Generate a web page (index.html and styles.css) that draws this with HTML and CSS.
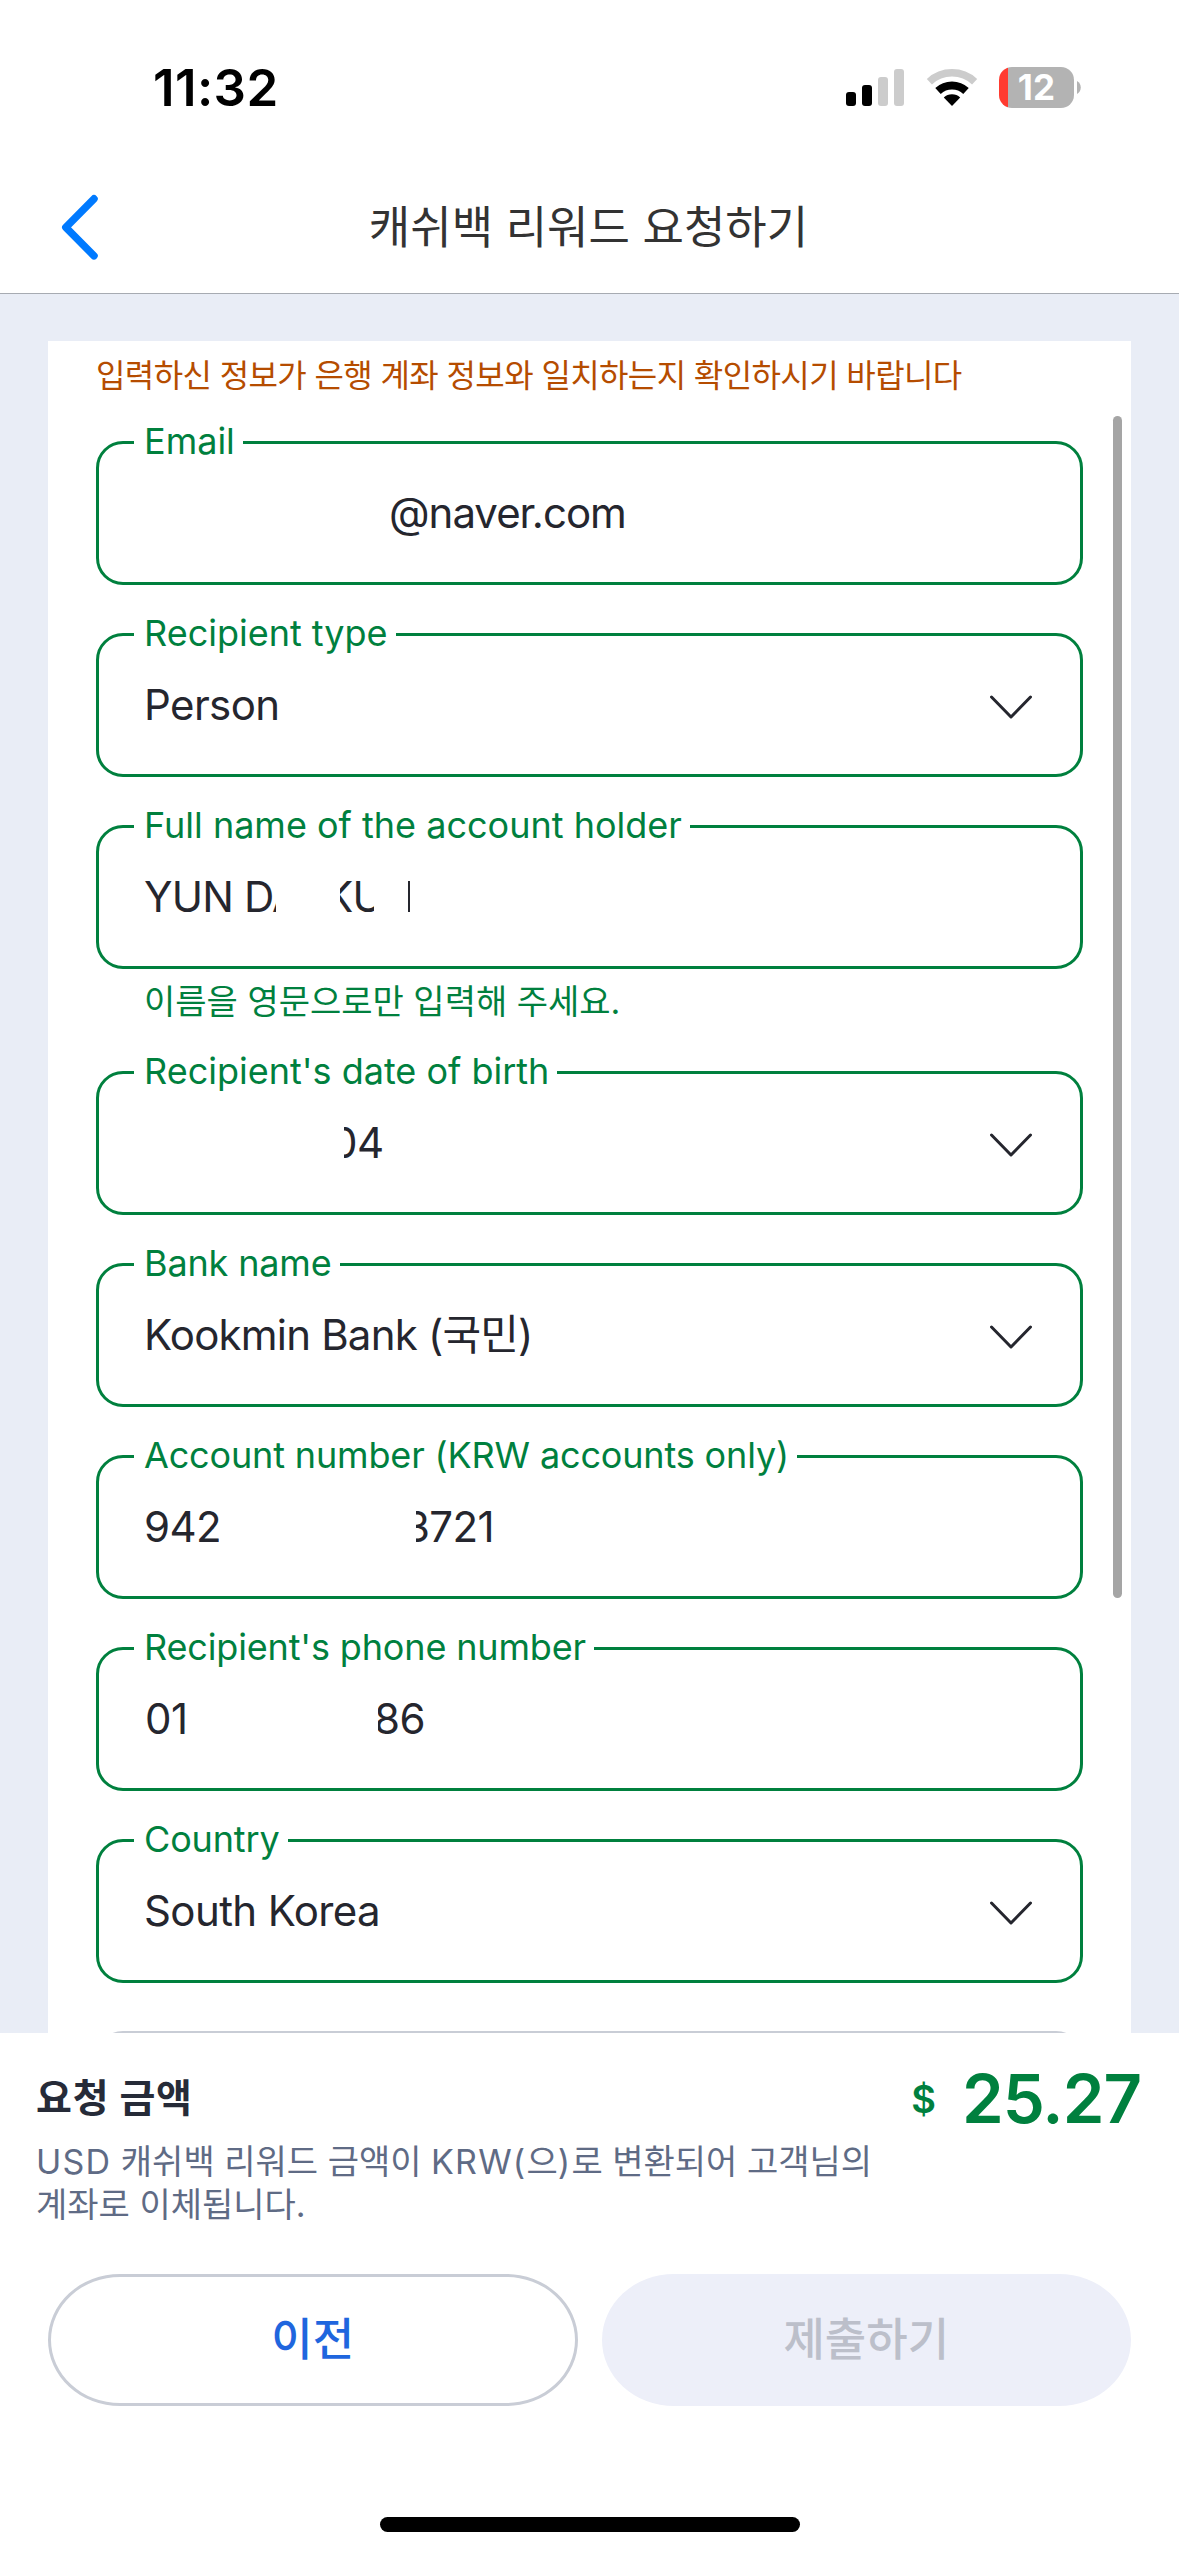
FILE: index.html
```
<!DOCTYPE html>
<html lang="ko">
<head>
<meta charset="utf-8">
<title>캐쉬백 리워드 요청하기</title>
<link rel="stylesheet" href="styles.css">
</head>
<body>
<div class="screen">
  <div class="status">
    <span class="time">11:32</span>
    <div class="indicators">
      <svg class="signal" width="58" height="38" viewBox="0 0 58 38">
        <rect x="0" y="23" width="10" height="14" rx="3"/>
        <rect x="16" y="16" width="10" height="21" rx="3"/>
        <rect class="dim" x="32" y="8" width="10" height="29" rx="3"/>
        <rect class="dim" x="48" y="0" width="10" height="37" rx="3"/>
      </svg>
      <svg class="wifi" width="52" height="38" viewBox="0 0 52 38">
        <path class="arc dim" d="M3.4 12.7A33.2 33.2 0 0 1 48.6 12.7"/>
        <path class="arc" d="M12 22A20.5 20.5 0 0 1 40 22"/>
        <path d="M26 37L17.8 28.4A12 12 0 0 1 34.2 28.4Z"/>
      </svg>
      <div class="battery">
        <div class="cell"><span>12</span></div>
        <svg width="4" height="14" viewBox="0 0 4 14"><path d="M0 0C5 2.5 5 10.500 0 13Z"/></svg>
      </div>
    </div>
  </div>

  <header class="nav">
    <svg class="back" width="40" height="68" viewBox="0 0 40 68"><path d="M34 4.800L5.800 33.300L34 61.800"/></svg>
    <h1>캐쉬백 리워드 요청하기</h1>
  </header>

  <main class="body">
    <section class="card">
      <p class="warning">입력하신 정보가 은행 계좌 정보와 일치하는지 확인하시기 바랍니다</p>

      <div class="field">
        <label>Email</label>
        <div class="value email">@naver.com</div>
      </div>
      <div class="field">
        <label>Recipient type</label>
        <div class="value person">Person</div>
        <svg class="chevron" width="48" height="48" viewBox="0 0 48 48"><path d="M4.500 16L24 36L43.500 16"/></svg>
      </div>
      <div class="field">
        <label>Full name of the account holder</label>
        <div class="value name"><span class="slice first">YUN DA</span><span class="slice mid">KU</span><span class="slice last">I</span></div>
      </div>
      <p class="hint">이름을 영문으로만 입력해 주세요.</p>
      <div class="field">
        <label>Recipient's date of birth</label>
        <div class="value birth"><span class="slice tail">04</span></div>
        <svg class="chevron" width="48" height="48" viewBox="0 0 48 48"><path d="M4.500 16L24 36L43.500 16"/></svg>
      </div>
      <div class="field">
        <label class="tight">Bank name</label>
        <div class="value bank">Kookmin Bank (국민)</div>
        <svg class="chevron" width="48" height="48" viewBox="0 0 48 48"><path d="M4.500 16L24 36L43.500 16"/></svg>
      </div>
      <div class="field">
        <label class="tight">Account number (KRW accounts only)</label>
        <div class="value account"><span class="slice head">942</span><span class="slice tail">3721</span></div>
      </div>
      <div class="field">
        <label class="tight">Recipient's phone number</label>
        <div class="value phone"><span class="slice head">01</span><span class="slice tail">86</span></div>
      </div>
      <div class="field">
        <label class="tight">Country</label>
        <div class="value country">South Korea</div>
        <svg class="chevron" width="48" height="48" viewBox="0 0 48 48"><path d="M4.500 16L24 36L43.500 16"/></svg>
      </div>
      <div class="field empty"></div>
    </section>
    <div class="scrollbar"></div>
  </main>

  <footer class="summary">
    <div class="total">
      <h2>요청 금액</h2>
      <div class="amount"><span class="currency">$</span><span class="number">25.27</span></div>
    </div>
    <p class="note"><span class="latin">USD</span> 캐쉬백 리워드 금액이 <span class="latin">KRW(</span>으<span class="latin">)</span>로 변환되어 고객님의<br>계좌로 이체됩니다.</p>
    <div class="actions">
      <button class="btn prev">이전</button>
      <button class="btn submit" disabled>제출하기</button>
    </div>
    <div class="home"></div>
  </footer>
</div>
</body>
</html>
```
FILE: styles.css
```
* { box-sizing: border-box; margin: 0; padding: 0; }

body {
  background: #fff;
  font-family: Inter, "Noto Sans CJK KR", sans-serif;
  color: #25262e;
}

.screen {
  width: 1179px;
  height: 2556px;
  display: flex;
  flex-direction: column;
  overflow: hidden;
}

/* status bar */
.status {
  flex: none;
  height: 162px;
  padding: 13px 98px 0 153px;
  display: flex;
  justify-content: space-between;
  align-items: center;
}
.time { font-size: 51px; line-height: 62px; font-weight: 600; letter-spacing: 0.4px; color: #000; }
.indicators { display: flex; align-items: center; }
.signal .dim { fill: #ccc; }
.wifi { margin: 0 21px 0 22px; }
.wifi .arc { fill: none; stroke: #000; stroke-width: 8; }
.wifi .arc.dim { stroke: #ccc; stroke-width: 7.5; }
.battery { display: flex; align-items: center; gap: 3px; }
.battery svg { fill: #b3b3b3; }
.cell {
  width: 75px;
  height: 41px;
  border-radius: 13px;
  background: linear-gradient(to right, #ff3b30 9px, #b3b3b3 9px);
  display: flex;
  align-items: center;
  justify-content: center;
}
.cell span { color: #fff; font-size: 35px; line-height: 41px; font-weight: 700; letter-spacing: 0.2px; }

/* navigation */
.nav {
  flex: none;
  height: 132px;
  border-bottom: 1px solid #a7abb2;
  display: grid;
  grid-template-columns: 120px 1fr 120px;
  align-items: center;
}
.back { margin-left: 60px; }
.back path { fill: none; stroke: #007aff; stroke-width: 7.500; stroke-linecap: round; stroke-linejoin: round; }
.nav h1 { padding-right: 2px; font-size: 45px; line-height: 54px; font-weight: 400; color: #333; text-align: center; }

/* form */
.body {
  flex: none;
  position: relative;
  height: 1739px;
  padding: 47px 48px 0;
  background: #e9edf6;
  overflow: hidden;
}
.card { background: #fff; height: 1800px; padding: 15px 48px 0; }
.warning { font-size: 32px; line-height: 40px; letter-spacing: -0.62px; color: #b54c00; margin: 0 -20px 45px 0; white-space: nowrap; }

.field {
  position: relative;
  height: 144px;
  margin-bottom: 48px;
  padding: 0 45px 0 44px;
  border: 3px solid #00803e;
  border-radius: 27px;
  display: flex;
  align-items: center;
  justify-content: space-between;
}
.field.empty { border-color: #c9cdd6; }
.field label {
  position: absolute;
  left: 35px;
  top: -25px;
  padding: 0 8px 0 10px;
  background: #fff;
  color: #00803e;
  font-size: 36px;
  line-height: 44px;
  white-space: nowrap;
}
.field label.tight { letter-spacing: -0.15px; }

.value { display: flex; padding-bottom: 1px; font-size: 42px; line-height: 51px; white-space: pre; letter-spacing: -0.6px; }
.value.email { margin-left: 246px; letter-spacing: -1px; }
.value.person, .value.bank, .value.country { padding-left: 1px; }
.value.person { letter-spacing: -0.6px; }
.value.bank { letter-spacing: -0.8px; }
.name { letter-spacing: -0.8px; }

/* partially hidden characters */
.slice { display: block; overflow: hidden; }
.name .first { width: 133px; text-indent: 1px; }
.name .mid { width: 34px; margin-left: 64px; text-indent: -15px; }
.name .last { width: 2px; margin-left: 34px; text-indent: -5px; }
.birth .tail { width: 42px; margin-left: 201px; text-indent: -13px; }
.account .head { width: 76px; text-indent: 1px; }
.account .tail { width: 82px; margin-left: 197px; text-indent: -12px; }
.phone .head { width: 45px; text-indent: 2px; }
.phone .tail { width: 50px; margin-left: 190px; text-indent: -4px; }

.chevron path { fill: none; stroke: #25262e; stroke-width: 3; stroke-linecap: round; stroke-linejoin: round; }

.hint { margin: -36px 0 48px 48px; font-size: 34px; line-height: 42px; color: #00803e; }

.scrollbar {
  position: absolute;
  top: 122px;
  right: 57px;
  width: 9px;
  height: 1182px;
  border-radius: 5px;
  background: #a5a5a5;
}

/* summary */
.summary { flex: 1; display: flex; flex-direction: column; }
.total { height: 107px; padding: 0 38px 0 36px; display: flex; justify-content: space-between; }
.total h2 { margin-top: 41px; font-size: 39px; line-height: 47px; font-weight: 700; letter-spacing: 0.8px; color: #262b38; }
.amount { display: flex; gap: 26px; color: #00803e; font-weight: 600; }
.currency { margin-top: 43px; font-size: 38px; line-height: 46px; }
.number { margin-top: 26px; font-size: 67px; line-height: 80px; letter-spacing: -1px; }
.note { padding: 0 36px; font-size: 34px; line-height: 43px; color: #5f6b85; }
.note .latin { letter-spacing: 1.2px; }

.actions { margin-top: 48px; padding: 0 48px; display: grid; grid-template-columns: 1fr 1fr; gap: 24px; }
.btn {
  height: 132px;
  border: 3px solid transparent;
  border-radius: 72px / 66px;
  font: 500 45px/54px Inter, "Noto Sans CJK KR", sans-serif;
}
.prev { background: #fff; border-color: #c9cdd6; color: #1f66de; }
.submit { background: #edeff9; color: #bcbfca; }

.home { width: 420px; height: 15px; margin: auto auto 24px; border-radius: 8px; background: #000; }
```
